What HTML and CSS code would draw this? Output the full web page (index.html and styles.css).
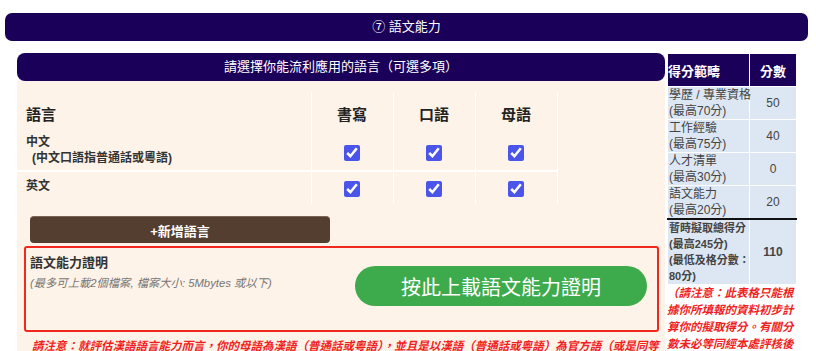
FILE: index.html
```html
<!DOCTYPE html>
<html lang="zh-Hant">

<head>
    <meta charset="UTF-8">
    <meta name="viewport" content="width=device-width, initial-scale=1.0">
    <title>語文能力</title>
    <link rel="stylesheet" href="styles.css">
</head>

<body>
    <div class="page">
        <div class="title-bar">⑦ 語文能力</div>

        <div class="main">
            <div class="left">
                <div class="sub-bar">請選擇你能流利應用的語言（可選多項）</div>

                <div class="lang-panel">
                    <table class="lang-table">
                        <colgroup>
                            <col class="col-name">
                            <col class="col-check">
                            <col class="col-check">
                            <col class="col-check">
                        </colgroup>
                        <thead>
                            <tr class="head-row">
                                <th class="name-head">語言</th>
                                <th>書寫</th>
                                <th>口語</th>
                                <th>母語</th>
                            </tr>
                        </thead>
                        <tbody>
                            <tr class="row-zh">
                                <td class="lang-name">中文<br><span class="lang-hint">(中文口語指普通話或粵語)</span></td>
                                <td><input type="checkbox" checked></td>
                                <td><input type="checkbox" checked></td>
                                <td><input type="checkbox" checked></td>
                            </tr>
                            <tr class="row-en">
                                <td class="lang-name">英文</td>
                                <td><input type="checkbox" checked></td>
                                <td><input type="checkbox" checked></td>
                                <td><input type="checkbox" checked></td>
                            </tr>
                        </tbody>
                    </table>

                    <button class="add-btn" type="button">+新增語言</button>

                    <div class="upload-box">
                        <div class="upload-text">
                            <div class="upload-title">語文能力證明</div>
                            <div class="upload-hint">(最多可上載2個檔案, 檔案大小: 5Mbytes 或以下)</div>
                        </div>
                        <button class="upload-btn" type="button">按此上載語文能力證明</button>
                    </div>

                    <p class="warn">請注意：就評估漢語語言能力而言，你的母語為漢語（普通話或粵語），並且是以漢語（普通話或粵語）為官方語（或是同等地位的語言）的國家或地區接受教育。</p>
                </div>
            </div>

            <div class="right">
                <table class="score-table">
                    <thead>
                        <tr>
                            <th class="cat-head">得分範疇</th>
                            <th class="num-head">分數</th>
                        </tr>
                    </thead>
                    <tbody>
                        <tr>
                            <td class="cat">學歷 / 專業資格<br>(最高70分)</td>
                            <td class="num">50</td>
                        </tr>
                        <tr>
                            <td class="cat">工作經驗<br>(最高75分)</td>
                            <td class="num">40</td>
                        </tr>
                        <tr>
                            <td class="cat">人才清單<br>(最高30分)</td>
                            <td class="num">0</td>
                        </tr>
                        <tr>
                            <td class="cat">語文能力<br>(最高20分)</td>
                            <td class="num">20</td>
                        </tr>
                        <tr class="total-row">
                            <td class="cat">暫時擬取總得分<br>(最高245分)<br>(最低及格分數：<br>80分)</td>
                            <td class="num">110</td>
                        </tr>
                    </tbody>
                </table>
                <p class="side-note">（請注意：此表格只能根據你所填報的資料初步計算你的擬取得分。有關分數未必等同經本處評核後的最終得分。）</p>
            </div>
        </div>
    </div>
</body>

</html>
```

FILE: styles.css
```css
body {
    font-family: 'Liberation Sans', 'Noto Sans CJK TC', sans-serif;
    background-color: #fff;
    margin: 0;
    padding: 0;
    color: #333;
}

.page {
    padding: 13px 8px 0 5px;
    height: 338px;
    overflow: hidden;
}

.title-bar {
    background-color: #1a0059;
    color: white;
    height: 28px;
    line-height: 28px;
    border-radius: 7px;
    text-align: center;
    font-size: 13px;
}

.main {
    display: flex;
    gap: 2px;
    margin-top: 12px;
    padding-left: 12px;
}

.left {
    width: 648px;
}

.sub-bar {
    background-color: #1a0059;
    color: white;
    height: 28px;
    line-height: 28px;
    border-radius: 8px;
    text-align: center;
    font-size: 13px;
}

.lang-panel {
    background-color: #fef3e8;
    padding-top: 11px;
    height: 300px;
}

/* language table */

.lang-table {
    width: 540px;
    border-collapse: collapse;
    table-layout: fixed;
}

.col-name {
    width: 294px;
}

.col-check {
    width: 82px;
}

.lang-table th,
.lang-table td {
    border-left: 1px solid #fff;
    border-right: 1px solid #fff;
    padding: 0;
    text-align: center;
    vertical-align: middle;
}

.lang-table th:first-child,
.lang-table td:first-child {
    border-left: none;
}

.lang-table tr {
    border-bottom: 2px solid #fff;
}

.lang-table tr:last-child {
    border-bottom: none;
}

.head-row {
    height: 42px;
}

.lang-table th {
    font-size: 15px;
    font-weight: bold;
    color: #222;
}

.lang-table .name-head {
    text-align: left;
    padding-left: 9px;
}

.row-zh {
    height: 37px;
}

.row-en {
    height: 33px;
}

.lang-table .lang-name {
    text-align: left;
    padding: 0 0 4px 9px;
    font-size: 12px;
    font-weight: bold;
    line-height: 16px;
}

.lang-hint {
    padding-left: 6px;
}

.lang-table input {
    width: 16px;
    height: 16px;
    margin: 0;
    accent-color: #4b55ea;
    vertical-align: middle;
}

/* buttons and upload box */

.add-btn {
    display: block;
    width: 300px;
    height: 27px;
    margin: 12px 0 0 13px;
    border: none;
    border-top: 1px solid #7a6454;
    border-radius: 4px;
    background-color: #543e30;
    color: white;
    font-family: inherit;
    font-size: 13px;
    font-weight: bold;
}

.upload-box {
    display: flex;
    justify-content: space-between;
    align-items: flex-start;
    width: 635px;
    height: 86px;
    box-sizing: border-box;
    margin: 3px 0 0 7px;
    padding: 7px 10px 0 4px;
    border: 2px solid #f0281e;
    border-radius: 3px;
}

.upload-title {
    font-size: 13px;
    font-weight: bold;
    line-height: 16px;
}

.upload-hint {
    margin-top: 4px;
    font-size: 11.3px;
    font-style: italic;
    color: #777;
    line-height: 16px;
}

.upload-btn {
    width: 292px;
    height: 40px;
    margin-top: 11px;
    border: none;
    border-radius: 20px;
    background-color: #3dab4b;
    color: white;
    font-family: inherit;
    font-size: 20px;
}

.warn {
    margin: 6px 0 0 15px;
    color: #f01e1e;
    font-size: 11.5px;
    font-weight: bold;
    font-style: italic;
    line-height: 17px;
}

/* score table */

.right {
    width: 130px;
}

.score-table {
    width: 130px;
    border-collapse: collapse;
    table-layout: fixed;
    font-size: 12px;
}

.score-table th,
.score-table td {
    border: 1px solid #fff;
    padding: 0;
}

.score-table th {
    background-color: #1a0059;
    color: white;
    height: 32px;
    font-size: 13px;
    font-weight: bold;
}

.cat-head {
    width: 81px;
    text-align: left;
}

.num-head {
    text-align: center;
}

.score-table td {
    background-color: #dce7f3;
    line-height: 16px;
    color: #444;
}

.score-table .cat {
    white-space: nowrap;
    padding-left: 1px;
}

.score-table .num {
    text-align: center;
}

.total-row td {
    border-top: 2px solid #111;
    font-weight: bold;
}

.total-row .cat {
    font-size: 11px;
}

.side-note {
    margin: 0;
    color: #f01e1e;
    font-size: 11.5px;
    font-weight: bold;
    font-style: italic;
    line-height: 17px;
}
```
